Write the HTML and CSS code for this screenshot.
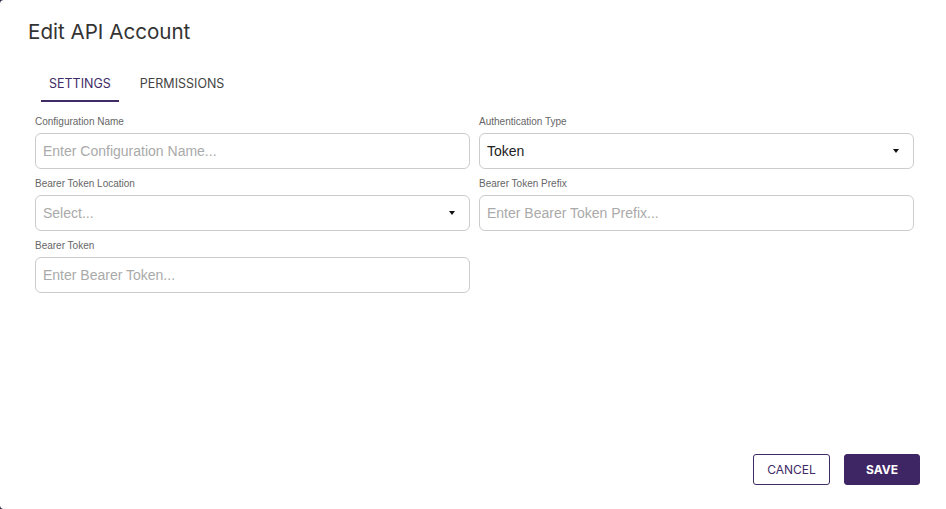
FILE: index.html
```html
<!DOCTYPE html>
<html>
<head>
<meta charset="utf-8">
<link rel="stylesheet" href="styles.css">
</head>
<body>
<div class="dialog">
  <h1 class="title">Edit API Account</h1>
  <div class="tabs">
    <div class="tab active">SETTINGS</div>
    <div class="tab">PERMISSIONS</div>
  </div>
  <div class="form">
    <div class="field">
      <label class="label">Configuration Name</label>
      <div class="input placeholder">Enter Configuration Name...</div>
    </div>
    <div class="field">
      <label class="label">Authentication Type</label>
      <div class="input select"><span class="value">Token</span><span class="caret"></span></div>
    </div>
    <div class="field">
      <label class="label">Bearer Token Location</label>
      <div class="input select placeholder"><span>Select...</span><span class="caret"></span></div>
    </div>
    <div class="field">
      <label class="label">Bearer Token Prefix</label>
      <div class="input placeholder">Enter Bearer Token Prefix...</div>
    </div>
    <div class="field">
      <label class="label">Bearer Token</label>
      <div class="input placeholder">Enter Bearer Token...</div>
    </div>
  </div>
  <div class="footer">
    <button class="btn btn-outline">CANCEL</button>
    <button class="btn btn-primary">SAVE</button>
  </div>
</div>
</body>
</html>
```
FILE: styles.css
```css
html, body {
  margin: 0;
  padding: 0;
  background: #2e2640;
}
.dialog {
  box-sizing: border-box;
  width: 946px;
  height: 509px;
  background: #fff;
  border-radius: 4px 0 0 4px;
  display: flex;
  flex-direction: column;
  font-family: Inter, "Liberation Sans", sans-serif;
}
.title {
  margin: 20px 0 0 28px;
  font-size: 20.6px;
  line-height: 24px;
  font-weight: 400;
  color: #333;
}
.tabs {
  display: flex;
  gap: 13px;
  margin: 23px 0 0 41px;
}
.tab {
  height: 35px;
  box-sizing: border-box;
  padding: 0 8px;
  display: flex;
  align-items: center;
  font-size: 12.5px;
  color: #444;
  border-bottom: 2px solid transparent;
}
.tab.active {
  color: #3f2b66;
  border-bottom-color: #3f2b66;
}
.form {
  display: grid;
  grid-template-columns: 435px 435px;
  column-gap: 9px;
  row-gap: 8px;
  margin: 13px 0 0 35px;
  font-family: "Liberation Sans", Arial, sans-serif;
}
.field {
  display: flex;
  flex-direction: column;
}
.label {
  font-size: 10px;
  line-height: 13px;
  color: #666;
  margin-bottom: 5px;
}
.input {
  box-sizing: border-box;
  height: 36px;
  border: 1px solid #ccc;
  border-radius: 6px;
  padding: 0 7px;
  display: flex;
  align-items: center;
  font-size: 14px;
  color: #222;
}
.placeholder {
  color: #aaa;
}
.select {
  justify-content: space-between;
  padding-right: 14px;
}
.caret {
  width: 0;
  height: 0;
  border-left: 3.5px solid transparent;
  border-right: 3.5px solid transparent;
  border-top: 4px solid #111;
}
.footer {
  margin-top: auto;
  display: flex;
  justify-content: flex-end;
  gap: 14px;
  padding: 0 26px 24px 0;
}
.btn {
  box-sizing: border-box;
  height: 31px;
  border-radius: 3px;
  font-family: Inter, "Liberation Sans", sans-serif;
  font-size: 12px;
  cursor: pointer;
}
.btn-outline {
  width: 77px;
  background: #fff;
  border: 1px solid #3f2b66;
  color: #3f2b66;
}
.btn-primary {
  width: 76px;
  background: #3e2564;
  border: 1px solid #3e2564;
  color: #fff;
  font-weight: 700;
}
```
